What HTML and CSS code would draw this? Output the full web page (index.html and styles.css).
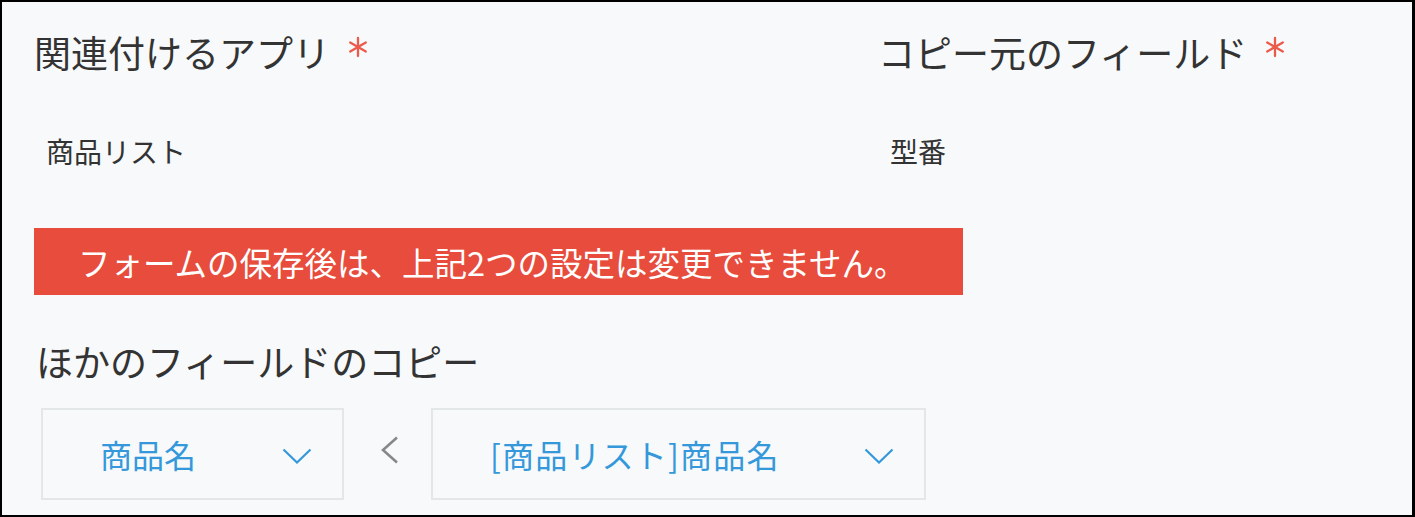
FILE: index.html
```html
<!DOCTYPE html>
<html lang="ja">
<head>
<meta charset="utf-8">
<link rel="stylesheet" href="styles.css">
</head>
<body>
<div class="frame">
  <div class="top-row">
    <div class="col col-app">
      <div class="label">関連付けるアプリ<svg class="req" width="22" height="22" viewBox="0 0 22 22" aria-label="*"><g stroke="#ec5a4c" stroke-width="2.3" stroke-linecap="round"><path d="M11 2 V20"/><path d="M3.2 6.5 L18.8 15.5"/><path d="M3.2 15.5 L18.8 6.5"/></g></svg></div>
      <div class="value">商品リスト</div>
    </div>
    <div class="col col-field">
      <div class="label">コピー元のフィールド<svg class="req" width="22" height="22" viewBox="0 0 22 22" aria-label="*"><g stroke="#ec5a4c" stroke-width="2.3" stroke-linecap="round"><path d="M11 2 V20"/><path d="M3.2 6.5 L18.8 15.5"/><path d="M3.2 15.5 L18.8 6.5"/></g></svg></div>
      <div class="value">型番</div>
    </div>
  </div>
  <div class="alert">フォームの保存後は、上記2つの設定は変更できません。</div>
  <div class="label section">ほかのフィールドのコピー</div>
  <div class="mapping">
    <div class="select select-dest">
      <span class="select-text">商品名</span>
      <svg class="chevron" width="30" height="16" viewBox="0 0 30 16"><path d="M1.5 1.5 L15 14.5 L28.5 1.5" fill="none" stroke="#3498db" stroke-width="2.2"/></svg>
    </div>
    <svg class="arrow" width="20" height="28" viewBox="0 0 20 28"><path d="M17 1.5 L3 14 L17 26.5" fill="none" stroke="#888888" stroke-width="2.6"/></svg>
    <div class="select select-src">
      <span class="select-text">[商品リスト]商品名</span>
      <svg class="chevron" width="30" height="16" viewBox="0 0 30 16"><path d="M1.5 1.5 L15 14.5 L28.5 1.5" fill="none" stroke="#3498db" stroke-width="2.2"/></svg>
    </div>
  </div>
</div>
</body>
</html>
```
FILE: styles.css
```css
html, body {
  margin: 0;
  padding: 0;
  background: #000;
}
body {
  width: 1415px;
  height: 517px;
  overflow: hidden;
  font-family: "Noto Sans CJK JP", "Noto Sans", sans-serif;
  color: #333;
}
.frame {
  margin: 2px 3px 0 2px;
  height: 513px;
  background: #f7f9fa;
  padding: 24px 0 0 32px;
  box-sizing: border-box;
}
.top-row {
  display: flex;
}
.col-app {
  width: 844px;
}
.label {
  font-size: 37px;
  line-height: 52px;
  color: #333;
  white-space: nowrap;
}
.req {
  margin-left: 17px;
  vertical-align: 10px;
}
.value {
  font-size: 28px;
  line-height: 40px;
  margin-top: 53px;
  padding-left: 12px;
  color: #333;
}
.alert {
  margin-top: 57px;
  width: 929px;
  height: 67px;
  box-sizing: border-box;
  background: #e74c3c;
  color: #fff;
  font-size: 32.5px;
  line-height: 67px;
  padding-left: 44px;
  white-space: nowrap;
}
.section {
  margin-top: 40px;
  padding-left: 2px;
}
.mapping {
  display: flex;
  align-items: center;
  margin-top: 21px;
  padding-left: 7px;
}
.select {
  height: 92px;
  box-sizing: border-box;
  border: 2px solid #e3e7e8;
  display: flex;
  align-items: center;
  color: #3498db;
  font-size: 32px;
}
.select-dest {
  width: 303px;
  padding-left: 57px;
}
.select-src {
  width: 495px;
  padding-left: 57px;
}
.select-src .select-text {
  letter-spacing: 1.2px;
}
.select-text {
  flex: 1;
  white-space: nowrap;
}
.chevron {
  margin-right: 30px;
  margin-top: 4px;
}
.arrow {
  margin: -8px 31px 0 36px;
}
```
